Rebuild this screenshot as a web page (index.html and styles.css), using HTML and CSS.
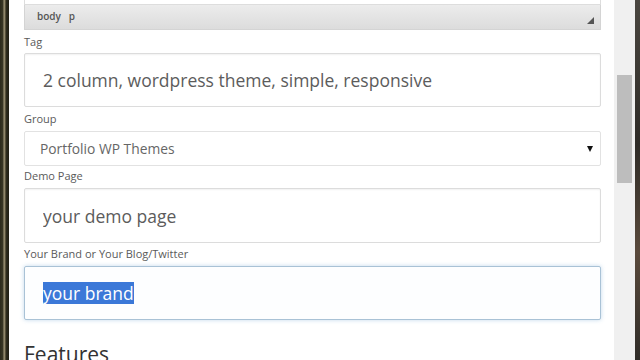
FILE: index.html
```html
<!DOCTYPE html>
<html lang="en">
<head>
  <meta charset="UTF-8" />
  <title>Add Theme</title>
  <link rel="stylesheet" href="styles.css">
</head>
<body>
  <div class="frame-left"></div>

  <div class="panel">
    <div class="editor">
      <div class="editor-area"></div>
      <div class="editor-status">
        <span class="path">body &nbsp; p</span>
        <span class="grip"></span>
      </div>
    </div>

    <label class="label label-first">Tag</label>
    <input class="field" type="text" value="2 column, wordpress theme, simple, responsive">

    <label class="label label-group">Group</label>
    <div class="select">
      <span>Portfolio WP Themes</span>
      <span class="arrow"></span>
    </div>

    <label class="label label-tight">Demo Page</label>
    <input class="field field-demo" type="text" value="your demo page">

    <label class="label">Your Brand or Your Blog/Twitter</label>
    <div class="field focused"><span class="selected">your brand</span></div>

    <h2 class="heading">Features</h2>
  </div>

  <div class="scrollbar">
    <div class="thumb"></div>
  </div>

  <div class="frame-right"></div>
</body>
</html>
```

FILE: styles.css
```css
html, body {
  height: 100%;
}
body {
  margin: 0;
  display: flex;
  overflow: hidden;
  background: #fff;
  font-family: "Open Sans", "Noto Sans", sans-serif;
  color: #555;
}

.frame-left {
  width: 9px;
  flex: none;
  background: linear-gradient(to right, #2b2a1c 0, #3a3826 3px, #a49a7c 4px, #7d7458 5px, #2f2d1e 6px, #1f1e14 9px);
}
.frame-right {
  width: 5px;
  flex: none;
  background: linear-gradient(to bottom, #4a4640, #2e2b27 40%, #5a4a3c 70%, #2f2c28);
}

.panel {
  flex: 1;
  padding: 0 13px 0 15px;
  background: #fff;
}

.editor-area {
  height: 4px;
  border: 1px solid #ddd;
  border-top: none;
  background: #fff;
}
.editor-status {
  height: 24px;
  display: flex;
  align-items: center;
  justify-content: space-between;
  padding: 0 6px 0 12px;
  background: linear-gradient(to bottom, #ececec, #dcdcdc);
  border: 1px solid #d4d4d4;
  border-top: none;
}
.path {
  font-size: 10px;
  color: #555;
  font-weight: 600;
  margin-top: -2px;
}
.grip {
  width: 0;
  height: 0;
  border-left: 7px solid transparent;
  border-bottom: 7px solid #555;
  margin-top: 6px;
}

.label {
  display: block;
  font-size: 11px;
  line-height: 14px;
  padding: 4px 0 5px;
  color: #5a5a5a;
}
.label-first {
  padding-top: 5px;
  padding-bottom: 4px;
}
.label-group {
  padding: 5px 0 5px;
}
.label-tight {
  padding: 3px 0 5px;
}

.field {
  display: block;
  box-sizing: border-box;
  width: 100%;
  height: 54px;
  margin: 0;
  padding: 0 18px;
  border: 1px solid #dcdcdc;
  border-radius: 2px;
  box-shadow: inset 0 1px 2px rgba(0,0,0,0.06);
  font-family: inherit;
  font-size: 17.5px;
  color: #5c5c5c;
  background: #fff;
  outline: none;
}
.field-demo {
  height: 55px;
}
.focused {
  display: flex;
  align-items: center;
  border-color: #a9c2d6;
  box-shadow: 0 0 4px rgba(120,170,210,0.45);
  background: #fdfeff;
}
.selected {
  background: #3b78d8;
  color: #fff;
  line-height: 22px;
}

.select {
  box-sizing: border-box;
  height: 35px;
  display: flex;
  align-items: center;
  justify-content: space-between;
  padding: 0 7px 0 15px;
  border: 1px solid #e2e2e2;
  border-radius: 2px;
  font-size: 13.8px;
  color: #666;
}
.arrow {
  width: 0;
  height: 0;
  border-left: 3.5px solid transparent;
  border-right: 3.5px solid transparent;
  border-top: 6px solid #111;
}

.heading {
  margin: 21px 0 0;
  font-size: 21px;
  font-weight: 400;
  color: #333;
  line-height: 26px;
}

.scrollbar {
  width: 21px;
  flex: none;
  background: #f0f0f0;
  padding-top: 75px;
}
.thumb {
  height: 108px;
  margin: 0 3px;
  background: #bdbdbd;
}
```
